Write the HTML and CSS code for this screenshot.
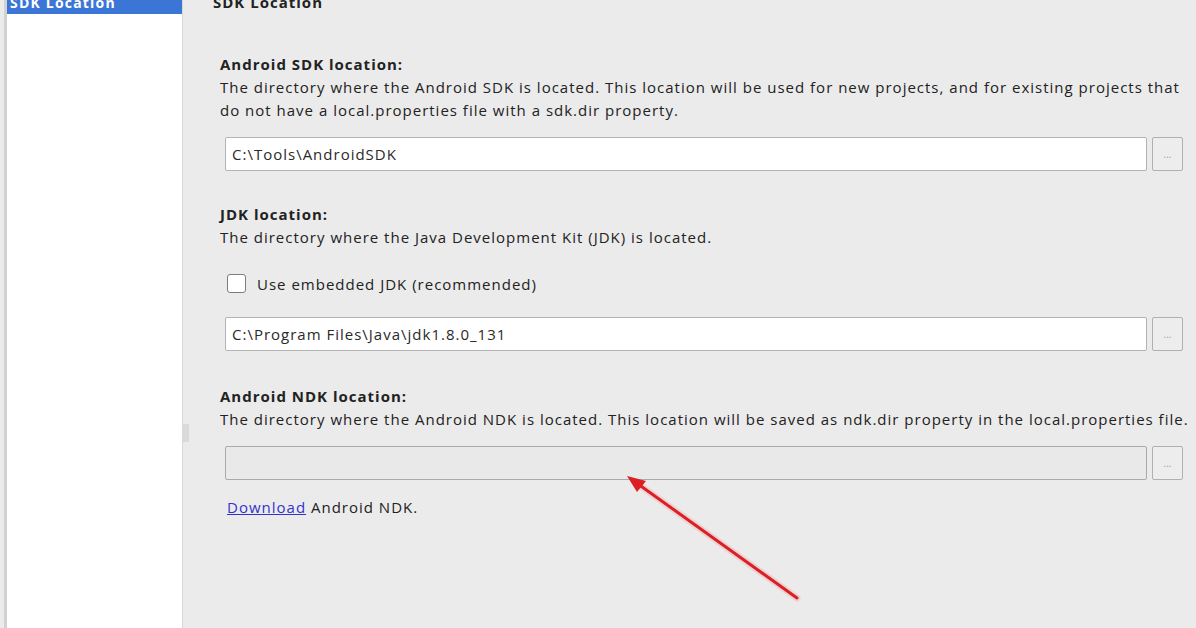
FILE: index.html
```html
<!DOCTYPE html>
<html lang="en">
<head>
<meta charset="utf-8">
<title>SDK Location</title>
<link rel="stylesheet" href="styles.css">
</head>
<body>
<div class="window">
  <aside class="sidebar">
    <div class="nav-item selected">SDK Location</div>
  </aside>
  <main class="content">
    <div class="grip"></div>
    <h1 class="page-title">SDK Location</h1>

    <section class="group group-sdk">
      <h2 class="group-title">Android SDK location:</h2>
      <p class="group-desc">The directory where the Android SDK is located. This location will be used for new projects, and for existing projects that<br>do not have a local.properties file with a sdk.dir property.</p>
      <div class="path-row">
        <div class="path-field">C:\Tools\AndroidSDK</div>
        <button class="browse">...</button>
      </div>
    </section>

    <section class="group">
      <h2 class="group-title">JDK location:</h2>
      <p class="group-desc">The directory where the Java Development Kit (JDK) is located.</p>
      <label class="check-row"><span class="checkbox"></span>Use embedded JDK (recommended)</label>
      <div class="path-row">
        <div class="path-field">C:\Program Files\Java\jdk1.8.0_131</div>
        <button class="browse">...</button>
      </div>
    </section>

    <section class="group group-ndk">
      <h2 class="group-title">Android NDK location:</h2>
      <p class="group-desc">The directory where the Android NDK is located. This location will be saved as ndk.dir property in the local.properties file.</p>
      <div class="path-row">
        <div class="path-field disabled"></div>
        <button class="browse">...</button>
      </div>
      <p class="download"><a href="#" class="link">Download</a> Android NDK.</p>
    </section>
  </main>
</div>
<svg class="annotation" width="1196" height="628" viewBox="0 0 1196 628" xmlns="http://www.w3.org/2000/svg">
  <line x1="797" y1="598" x2="638" y2="484" stroke="#f59a9a" stroke-width="7" stroke-linecap="round" opacity="0.3"/>
  <line x1="797" y1="598" x2="638" y2="484" stroke="#dc1f26" stroke-width="3" stroke-linecap="round"/>
  <polygon points="627,476 646,481 637,492" fill="#dc1f26"/>
</svg>
</body>
</html>
```
FILE: styles.css
```css
html, body {
  margin: 0;
  padding: 0;
  background: #ebebeb;
  overflow: hidden;
}

body {
  width: 1196px;
  height: 628px;
  position: relative;
  font-family: "Open Sans", "Noto Sans", "Liberation Sans", sans-serif;
  font-size: 15px;
  letter-spacing: 1px;
  color: #222;
}

.window {
  display: flex;
  margin-top: -9px;
  height: 637px;
}

.sidebar {
  width: 175px;
  margin-left: 4px;
  border-left: 3px solid #d2d2d2;
  border-right: 1px solid #d8d8d8;
  background: #fff;
  flex: none;
}

.nav-item {
  height: 23px;
  line-height: 23px;
  padding-left: 3px;
  font-weight: 700;
  font-size: 14px;
  letter-spacing: 1.2px;
}

.nav-item.selected {
  background: #3b75d6;
  color: #fff;
}

.content {
  flex: 1;
  position: relative;
  padding: 0 5px 0 30px;
}

.grip {
  position: absolute;
  left: 0;
  top: 433px;
  width: 6px;
  height: 18px;
  background: #dadada;
}

.page-title {
  margin: 0;
  font-size: 15px;
  font-weight: 700;
  line-height: 23px;
}

.group {
  padding-left: 7px;
  margin-top: 39px;
}

.group + .group {
  margin-top: 32px;
}

.group-ndk.group {
  margin-top: 34px;
}

.group-title {
  margin: 0;
  font-size: 15px;
  font-weight: 700;
  line-height: 23px;
}

.group-desc {
  margin: 0;
  line-height: 23px;
  white-space: nowrap;
}

.path-row {
  display: flex;
  gap: 5px;
  margin: 15px 8px 0 0;
  padding-left: 5px;
}

.path-field {
  flex: 1;
  box-sizing: border-box;
  height: 34px;
  border: 1px solid #b3b3b3;
  border-radius: 2px;
  background: #fff;
  line-height: 32px;
  padding-left: 6px;
  font-size: 15px;
  color: #2a2a2a;
}

.path-field.disabled {
  background: #e9e9e9;
  border-color: #aaaaaa;
}

.browse {
  width: 31px;
  height: 34px;
  box-sizing: border-box;
  border: 1px solid #b0b0b0;
  border-radius: 2px;
  background: #ededed;
  color: #a0a0a0;
  font-size: 10px;
  font-family: inherit;
  letter-spacing: 0;
  padding: 0;
  line-height: 1;
}

.check-row {
  display: flex;
  align-items: center;
  gap: 11px;
  margin-top: 23px;
  height: 23px;
  padding-left: 7px;
}

.checkbox {
  width: 19px;
  height: 19px;
  box-sizing: border-box;
  border: 1px solid #7d7d7d;
  border-radius: 3px;
  background: #fff;
  flex: none;
}

.check-row + .path-row {
  margin-top: 22px;
}

.download {
  margin: 16px 0 0;
  line-height: 23px;
  padding-left: 7px;
}

.link {
  color: #3333cc;
  text-decoration: underline;
}

.annotation {
  position: absolute;
  left: 0;
  top: 0;
  pointer-events: none;
}
```
